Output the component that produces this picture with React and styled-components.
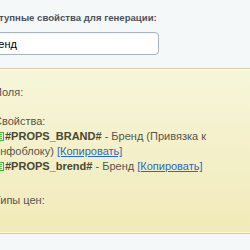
import React from "react";
import styled, { createGlobalStyle } from "styled-components";

const Global = createGlobalStyle`
  html, body { margin: 0; padding: 0; background: #f5f8f9; }
  body { font-family: "Liberation Sans", Arial, sans-serif; overflow: hidden; }
`;

const Page = styled.div`
  width: 290px;
  margin-left: -21px;
  padding-top: 11px;
`;

const Label = styled.div`
  font-size: 9.6px;
  font-weight: bold;
  color: #4c5258;
  line-height: 14px;
  margin-bottom: 7px;
  margin-left: 2px;
`;

const Input = styled.input`
  display: block;
  box-sizing: border-box;
  width: 180px;
  height: 23px;
  border: 1px solid #a9b3bc;
  border-radius: 4px;
  background: #fff;
  padding: 0 5px;
  font: 11px "Liberation Sans", Arial, sans-serif;
  color: #000;
  outline: none;
  box-shadow: inset 0 1px 1px rgba(0,0,0,0.05);
`;

const Note = styled.div`
  margin-top: 13px;
  margin-left: 15px;
  width: 300px;
  box-sizing: border-box;
  border-top: 1px solid #d9cfa4;
  border-bottom: 1px solid #d6cd9e;
  box-shadow: inset 0 1px 0 #fffef0, inset 0 -1px 0 #fbf8d6;
  background: linear-gradient(#f6f6da, #f1eab9);
  padding: 16px 0 25px 0;
  font-size: 11px;
  line-height: 15px;
  color: #56564a;
`;

const Line = styled.div`
  margin-bottom: ${(p) => p.$gap || 0}px;
  width: 222px;
`;

const Code = styled.b`
  color: #4a4830;
`;

const Link = styled.a`
  color: #2a6ac0;
  text-decoration: underline;
  cursor: pointer;
`;

const IconBox = styled.svg`
  vertical-align: -1px;
  margin-right: 1px;
`;

const Icon = () => (
  <IconBox width="10" height="9" viewBox="0 0 10 9">
    <rect x="0.5" y="0.5" width="9" height="8" fill="#f2fbe9" stroke="#3fae3f" />
    <rect x="2" y="2" width="6" height="1" fill="#5cbf4c" />
    <rect x="2" y="4" width="6" height="1" fill="#5cbf4c" />
    <rect x="2" y="6" width="6" height="1" fill="#5cbf4c" />
  </IconBox>
);

export default function App() {
  return (
    <>
      <Global />
      <Page>
        <Label>Доступные свойства для генерации:</Label>
        <Input defaultValue="Бренд" />
        <Note>
          <Line $gap={14}>Поля:</Line>
          <Line>Свойства:</Line>
          <Line>
            <Icon /><Code>#PROPS_BRAND#</Code> - Бренд (Привязка к инфоблоку) <Link>[Копировать]</Link>
          </Line>
          <Line $gap={19}>
            <Icon /><Code>#PROPS_brend#</Code> - Бренд <Link>[Копировать]</Link>
          </Line>
          <Line>Типы цен:</Line>
        </Note>
      </Page>
    </>
  );
}
